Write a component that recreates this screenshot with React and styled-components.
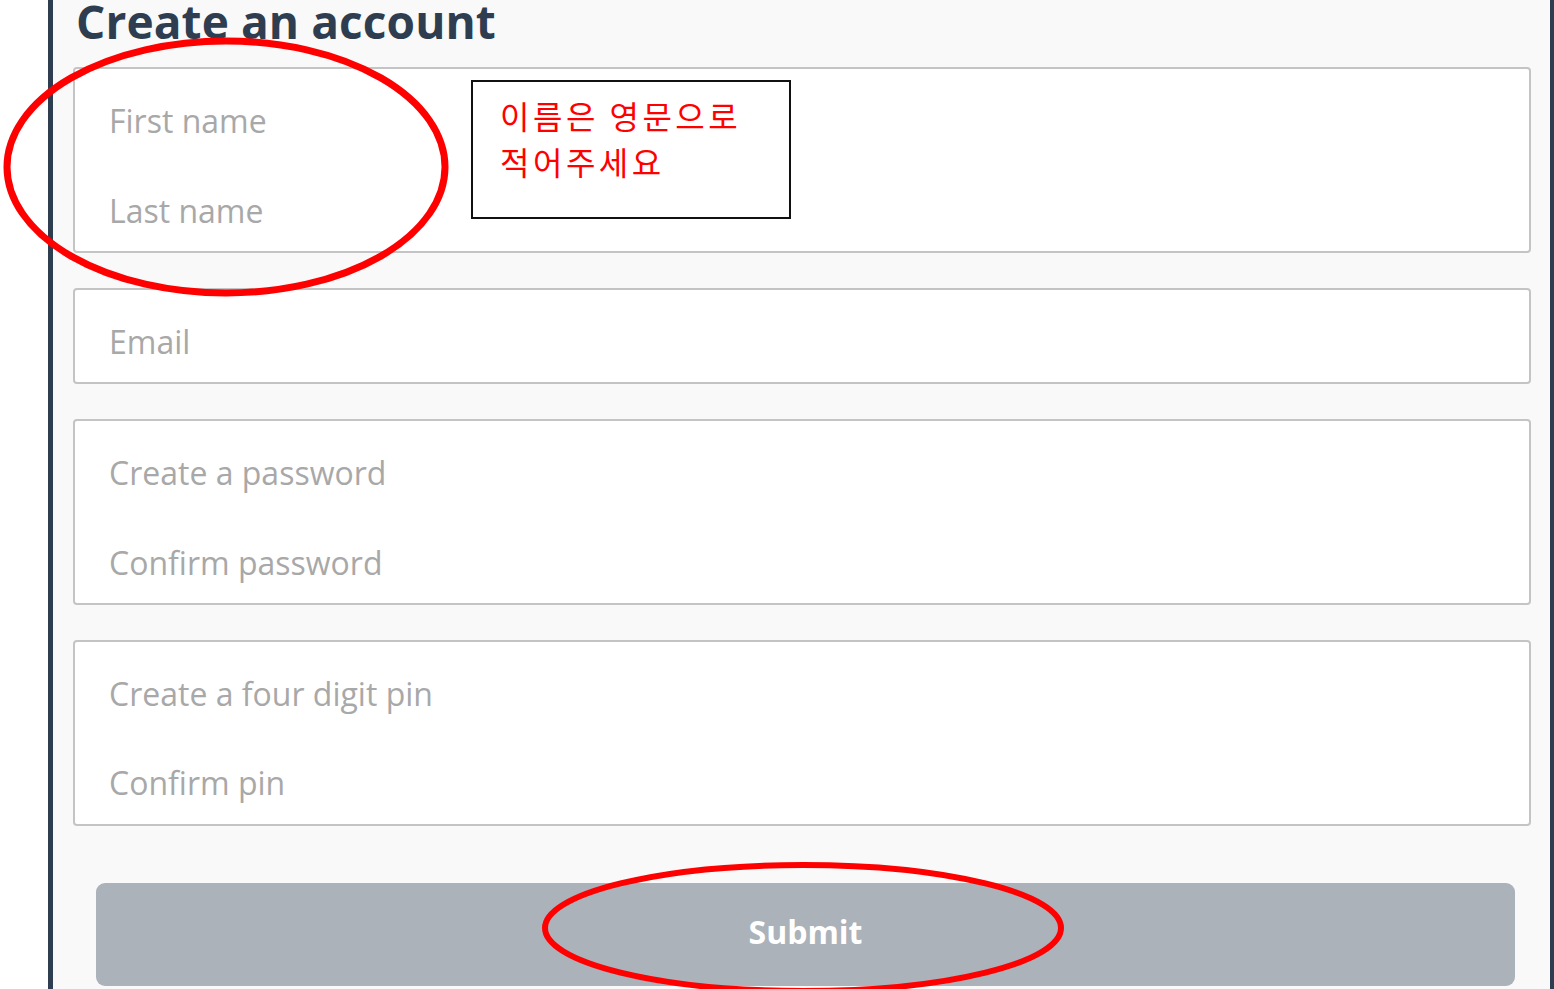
import React from 'react';
import styled, { createGlobalStyle } from 'styled-components';

const GlobalStyle = createGlobalStyle`
  html, body {
    margin: 0;
    padding: 0;
    background: #ffffff;
    font-family: "Open Sans", "Noto Sans", sans-serif;
  }
  * { box-sizing: border-box; }
`;

const Page = styled.div`
  position: relative;
  width: 1554px;
  height: 989px;
  overflow: hidden;
  padding-left: 48px;
`;

const Panel = styled.div`
  display: flow-root;
  height: 100%;
  background: #f9f9f9;
  border-left: 5px solid #2e3e50;
  border-right: 4px solid #2e3e50;
  padding: 0 19px 0 20px;
`;

const Title = styled.h1`
  margin: -10px 0 0 3px;
  font-size: 46px;
  font-weight: 700;
  color: #2e3e50;
  line-height: 62px;
  letter-spacing: 0.1px;
`;

const Form = styled.form`
  display: flex;
  flex-direction: column;
  gap: 35px;
  margin-top: 15px;
`;

const Group = styled.div`
  display: flex;
  flex-direction: column;
  background: #ffffff;
  border: 2px solid #c4c4c4;
  border-radius: 4px;
`;

const Input = styled.input`
  display: block;
  width: 100%;
  height: ${p => p.h || 91}px;
  border: none;
  background: transparent;
  padding: ${p => p.pt || 11}px 0 0 34px;
  font-family: "Open Sans", "Noto Sans", sans-serif;
  font-size: 32px;
  color: #555;
  outline: none;

  &::placeholder {
    color: #a8a8a8;
  }
`;

const Submit = styled.button`
  display: block;
  margin: 57px 0 0 23px;
  width: 1419px;
  height: 103px;
  border: none;
  border-radius: 9px;
  background: #abb2ba;
  color: #ffffff;
  font-family: "Open Sans", "Noto Sans", sans-serif;
  font-size: 32px;
  font-weight: 700;
  padding: 0 0 6px;
  cursor: pointer;
`;

const Note = styled.div`
  position: absolute;
  left: 471px;
  top: 80px;
  width: 320px;
  height: 139px;
  background: #ffffff;
  border: 2px solid #111;
  padding: 10px 0 0 27px;
  color: #ff0000;
  font-family: "Noto Sans CJK KR", sans-serif;
  font-size: 32px;
  font-weight: 400;
  line-height: 46px;
  letter-spacing: 3.5px;
`;

const Marks = styled.svg`
  position: absolute;
  left: 0;
  top: 0;
  pointer-events: none;
`;

export default function App() {
  return (
    <>
      <GlobalStyle />
      <Page>
        <Panel>
          <Title>Create an account</Title>
          <Form onSubmit={e => e.preventDefault()}>
            <Group>
              <Input placeholder="First name" />
              <Input placeholder="Last name" pt={9} />
            </Group>
            <Group>
              <Input placeholder="Email" h={92} pt={10} />
            </Group>
            <Group>
              <Input type="password" placeholder="Create a password" />
              <Input type="password" placeholder="Confirm password" pt={9} />
            </Group>
            <Group>
              <Input placeholder="Create a four digit pin" />
              <Input placeholder="Confirm pin" pt={8} />
            </Group>
          </Form>
          <Submit type="submit">Submit</Submit>
        </Panel>
        <Note>
          이름은 영문으로
          <br />
          적어주세요
        </Note>
        <Marks width="1554" height="989" viewBox="0 0 1554 989">
          <ellipse cx="226" cy="167" rx="219" ry="126" fill="none" stroke="#ff0000" strokeWidth="7" />
          <ellipse cx="803" cy="928" rx="258" ry="63" fill="none" stroke="#ff0000" strokeWidth="6" />
        </Marks>
      </Page>
    </>
  );
}
